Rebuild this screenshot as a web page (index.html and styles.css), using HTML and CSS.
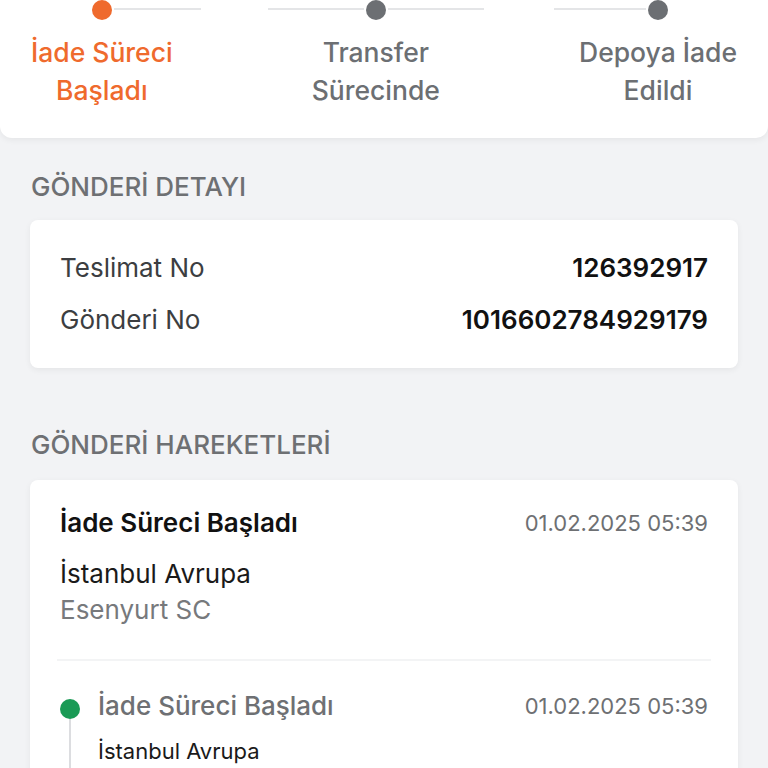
FILE: index.html
```html
<!DOCTYPE html>
<html lang="tr">
<head>
    <meta charset="UTF-8">
    <meta name="viewport" content="width=device-width, initial-scale=1.0">
    <title>Gönderi Takibi</title>
    <link rel="stylesheet" href="styles.css">
</head>
<body>

<div class="stepper-card">
    <div class="stepper">
        <div class="step active first">
            <span class="dot"></span>
            <p class="step-label">İade Süreci<br>Başladı</p>
        </div>
        <div class="step">
            <span class="dot"></span>
            <p class="step-label">Transfer<br>Sürecinde</p>
        </div>
        <div class="step last">
            <span class="dot"></span>
            <p class="step-label">Depoya İade<br>Edildi</p>
        </div>
    </div>
</div>

<h2 class="section-title">GÖNDERİ DETAYI</h2>
<div class="card detail-card">
    <div class="detail-row">
        <span class="detail-label">Teslimat No</span>
        <span class="detail-value">126392917</span>
    </div>
    <div class="detail-row">
        <span class="detail-label">Gönderi No</span>
        <span class="detail-value">1016602784929179</span>
    </div>
</div>

<h2 class="section-title second">GÖNDERİ HAREKETLERİ</h2>
<div class="card moves-card">
    <div class="move-head">
        <div class="move-top">
            <span class="move-title">İade Süreci Başladı</span>
            <span class="move-date">01.02.2025 05:39</span>
        </div>
        <p class="move-city">İstanbul Avrupa</p>
        <p class="move-branch">Esenyurt SC</p>
    </div>

    <div class="timeline">
        <div class="tl-item">
            <div class="tl-rail">
                <span class="tl-dot"></span>
                <span class="tl-line"></span>
            </div>
            <div class="tl-body">
                <div class="move-top">
                    <span class="tl-title">İade Süreci Başladı</span>
                    <span class="move-date">01.02.2025 05:39</span>
                </div>
                <p class="tl-city">İstanbul Avrupa</p>
            </div>
        </div>
    </div>
</div>

</body>
</html>
```

FILE: styles.css
```css
* {
    box-sizing: border-box;
    margin: 0;
    padding: 0;
    font-family: Inter, Roboto, sans-serif;
}

body {
    background-color: #f2f3f5;
    width: 768px;
    height: 768px;
    overflow: hidden;
}

/* ust adim kutusu */
.stepper-card {
    background: white;
    padding: 0 31px 29px;
    border-radius: 0 0 12px 12px;
    box-shadow: 0px 2px 6px rgba(0, 0, 0, 0.06);
}

.stepper {
    display: flex;
    justify-content: space-between;
}

.step {
    display: flex;
    flex-direction: column;
    align-items: center;
}

.dot {
    position: relative;
    width: 20px;
    height: 20px;
    border-radius: 50%;
    background-color: #6c6f73;
    margin-bottom: 13px;
}

.dot::before,
.dot::after {
    content: "";
    position: absolute;
    top: 8px;
    width: 96px;
    height: 2px;
    background-color: #e4e5e7;
}

.dot::before {
    right: 22px;
}

.dot::after {
    left: 22px;
}

.first .dot::before,
.last .dot::after {
    display: none;
}

.first .dot::after {
    width: 87px;
}

.last .dot::before {
    width: 92px;
}

.step.active .dot {
    background-color: #ef6a2d;
}

.step-label {
    font-size: 26.5px;
    font-weight: 500;
    line-height: 38px;
    text-align: center;
    color: #6c6f73;
}

.step.active .step-label {
    color: #ef6a2d;
}

/* bolum basliklari */
.section-title {
    font-size: 26px;
    font-weight: 500;
    color: #6e7073;
    padding: 34px 31px 0;
    line-height: 30px;
    margin-bottom: 18px;
}

.section-title.second {
    padding-top: 62px;
    margin-bottom: 20px;
}

.card {
    background: white;
    margin: 0 30px;
    border-radius: 8px;
    box-shadow: 0px 2px 6px rgba(0, 0, 0, 0.06);
}

.detail-card {
    padding: 33px 30px;
    display: flex;
    flex-direction: column;
    gap: 22px;
}

.detail-row {
    display: flex;
    justify-content: space-between;
    line-height: 30px;
    font-size: 26px;
}

.detail-label {
    color: #3c3e41;
}

.detail-value {
    font-weight: 600;
    color: #111;
}

/* hareketler */
.moves-card {
    padding: 28px 30px 0;
}

.move-top {
    display: flex;
    justify-content: space-between;
    align-items: center;
    line-height: 30px;
}

.move-title {
    font-size: 26px;
    font-weight: 600;
    color: #111;
}

.move-date {
    font-size: 22px;
    color: #6e7073;
}

.move-city {
    font-size: 26px;
    color: #1a1a1a;
    line-height: 30px;
    margin-top: 21px;
}

.move-branch {
    font-size: 26px;
    color: #77797c;
    line-height: 30px;
    margin-top: 6px;
}

.move-head {
    padding-bottom: 34px;
    border-bottom: 2px solid #f3f4f5;
    margin: 0 -3px;
    padding-left: 3px;
    padding-right: 3px;
}

.timeline {
    padding-top: 30px;
}

.tl-item {
    display: flex;
    gap: 18px;
}

.tl-rail {
    width: 20px;
    display: flex;
    flex-direction: column;
    align-items: center;
    padding-top: 8px;
}

.tl-dot {
    width: 20px;
    height: 20px;
    border-radius: 50%;
    background-color: #1a9a55;
}

.tl-line {
    width: 2px;
    flex: 1;
    background-color: #dcdde0;
}

.tl-body {
    flex: 1;
}

.tl-title {
    font-size: 26px;
    font-weight: 500;
    color: #6e7073;
}

.tl-city {
    font-size: 22px;
    color: #1a1a1a;
    line-height: 30px;
    margin-top: 15px;
    padding-bottom: 40px;
}
```
